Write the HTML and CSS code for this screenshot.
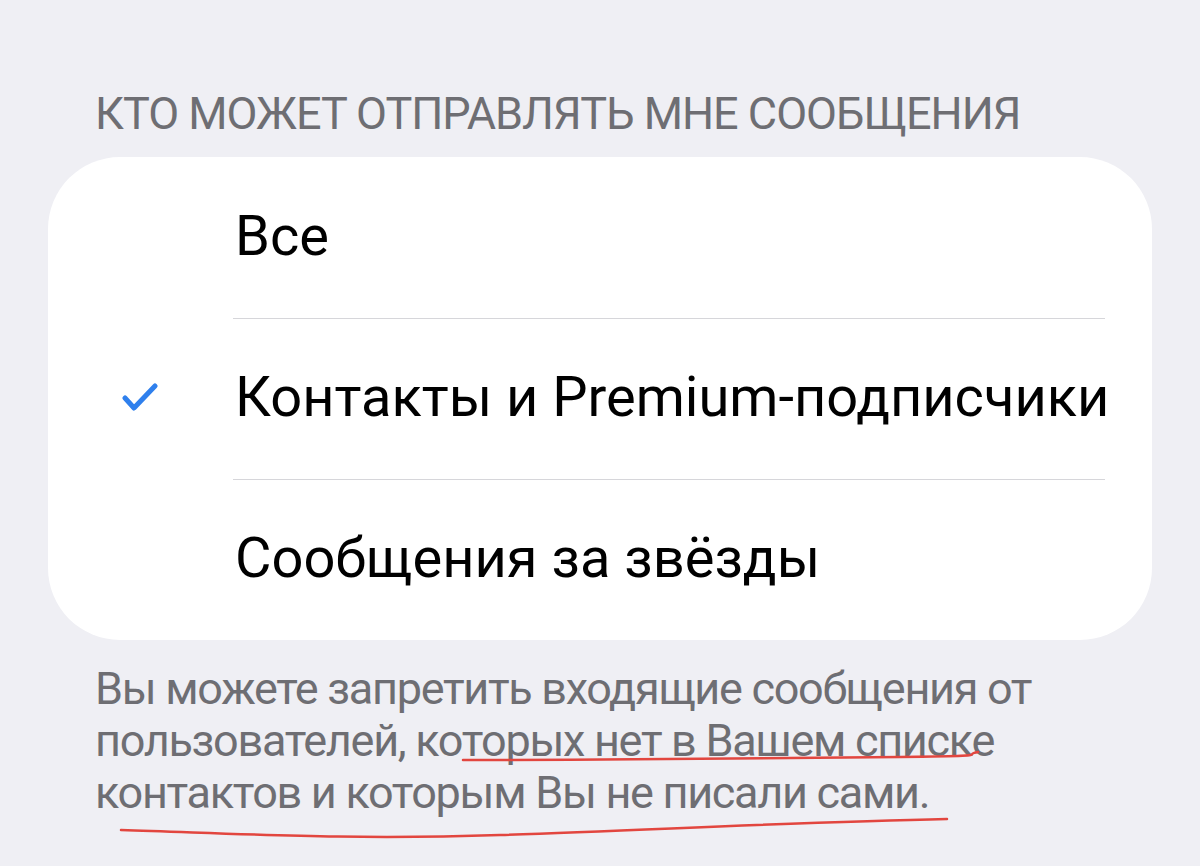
FILE: index.html
```html
<!DOCTYPE html>
<html lang="ru">
<head>
<meta charset="utf-8">
<link rel="stylesheet" href="styles.css">
</head>
<body>
<main class="page">
  <h2 class="section-title">Кто может отправлять мне сообщения</h2>
  <ul class="options">
    <li class="option">
      <span class="check"></span>
      <span class="label">Все</span>
    </li>
    <li class="option selected">
      <span class="check">
        <svg viewBox="0 0 40 32" width="40" height="32" aria-hidden="true">
          <path d="M4 15 L13 25 L34 3" fill="none" stroke="#2f80ed" stroke-width="5" stroke-linecap="round" stroke-linejoin="round"/>
        </svg>
      </span>
      <span class="label">Контакты и Premium-подписчики</span>
    </li>
    <li class="option">
      <span class="check"></span>
      <span class="label">Сообщения за звёзды</span>
    </li>
  </ul>
  <p class="footnote">Вы можете запретить входящие сообщения от пользователей, которых нет в Вашем списке контактов и которым Вы не писали сами.</p>
</main>
<svg class="annotations" viewBox="0 0 1200 866" width="1200" height="866" aria-hidden="true">
  <path d="M463 760 C 620 760, 800 758, 900 757 S 960 755, 978 752" fill="none" stroke="#e2463f" stroke-width="2.5" stroke-linecap="round"/>
  <path d="M121 830 C 250 834, 350 840, 500 835 S 800 822, 947 819" fill="none" stroke="#e2463f" stroke-width="2.5" stroke-linecap="round"/>
</svg>
</body>
</html>
```

FILE: styles.css
```css
* {
  box-sizing: border-box;
}

html, body {
  margin: 0;
  padding: 0;
}

body {
  background: #efeff4;
  font-family: Roboto, "Noto Sans", "Liberation Sans", sans-serif;
  width: 1200px;
  height: 866px;
  overflow: hidden;
  position: relative;
}

.page {
  padding: 87px 48px 0 48px;
}

.section-title {
  margin: 0 0 16px 47px;
  font-size: 45px;
  line-height: 54px;
  font-weight: 400;
  text-transform: uppercase;
  color: #6e6e73;
  letter-spacing: -1px;
}

.options {
  list-style: none;
  margin: 0;
  padding: 0;
  background: #ffffff;
  border-radius: 72px;
  overflow: hidden;
}

.option {
  display: flex;
  align-items: center;
  height: 161px;
  position: relative;
}

.option + .option {
  border-top: 1px solid #d6d6da;
  margin-left: 185px;
  margin-right: 47px;
}

.check {
  width: 187px;
  flex: 0 0 187px;
  display: flex;
  align-items: center;
  padding-left: 73px;
}

.option + .option .check {
  margin-left: -185px;
  width: 185px;
  flex-basis: 185px;
}

.label {
  font-size: 56px;
  color: #000;
  white-space: nowrap;
  padding-bottom: 4px;
}

.option + .option .label {
  margin-left: 2px;
}

.footnote {
  margin: 23px 0 0 47px;
  width: 1010px;
  font-size: 45px;
  line-height: 52px;
  font-weight: 400;
  letter-spacing: -1.3px;
  color: #6e6e73;
}

.annotations {
  position: absolute;
  top: 0;
  left: 0;
  pointer-events: none;
}
```
